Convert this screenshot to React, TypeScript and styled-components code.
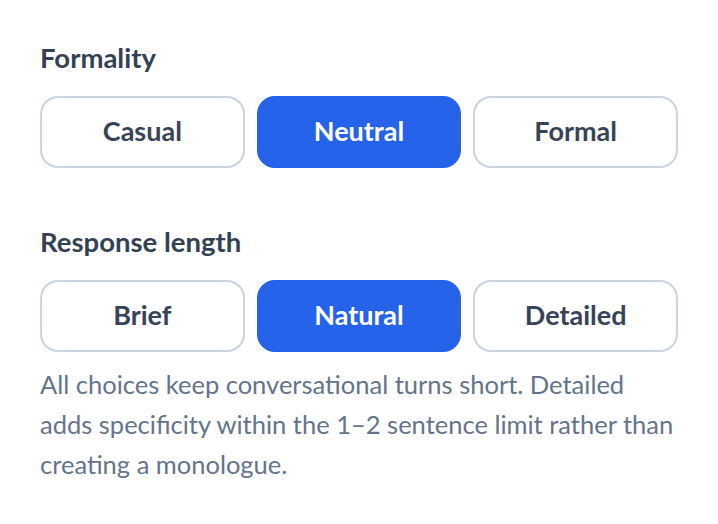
import React, { useState } from "react";
import styled, { createGlobalStyle } from "styled-components";

const Global = createGlobalStyle`
  html, body { margin: 0; padding: 0; background: #ffffff; }
  body { font-family: "Lato", "Noto Sans", sans-serif; -webkit-font-smoothing: antialiased; }
  * { box-sizing: border-box; }
`;

const Page = styled.div`
  padding: 40px 40px 0 40px;
  display: flex;
  flex-direction: column;
  gap: 56px;
`;

const Group = styled.section`
  display: flex;
  flex-direction: column;
`;

const Label = styled.div`
  font-size: 27.5px;
  line-height: 36px;
  font-weight: 700;
  color: #334155;
  margin-bottom: 20px;
`;

const Segments = styled.div`
  display: grid;
  grid-template-columns: repeat(3, 1fr);
  gap: 12px;
`;

const Option = styled.button<{ $active: boolean }>`
  height: 72px;
  border-radius: 18px;
  border: 2px solid ${(p) => (p.$active ? "#2563eb" : "#cbd5e1")};
  background: ${(p) => (p.$active ? "#2563eb" : "#ffffff")};
  color: ${(p) => (p.$active ? "#ffffff" : "#374357")};
  font-family: inherit;
  font-size: 27px;
  font-weight: 700;
  cursor: pointer;
  padding: 0 0 4px 0;
`;

const Note = styled.p`
  margin: 12px 0 0 0;
  font-size: 25.5px;
  line-height: 40px;
  color: #64748b;
`;

function Choice({ label, options, initial }: { label: string; options: string[]; initial: string }) {
  const [value, setValue] = useState(initial);
  return (
    <>
      <Label>{label}</Label>
      <Segments>
        {options.map((o) => (
          <Option key={o} $active={o === value} onClick={() => setValue(o)}>
            {o}
          </Option>
        ))}
      </Segments>
    </>
  );
}

export default function App() {
  return (
    <>
      <Global />
      <Page>
        <Group>
          <Choice label="Formality" options={["Casual", "Neutral", "Formal"]} initial="Neutral" />
        </Group>
        <Group>
          <Choice label="Response length" options={["Brief", "Natural", "Detailed"]} initial="Natural" />
          <Note>
            All choices keep conversational turns short. Detailed adds specificity within the 1–2 sentence limit rather than creating a monologue.
          </Note>
        </Group>
      </Page>
    </>
  );
}
